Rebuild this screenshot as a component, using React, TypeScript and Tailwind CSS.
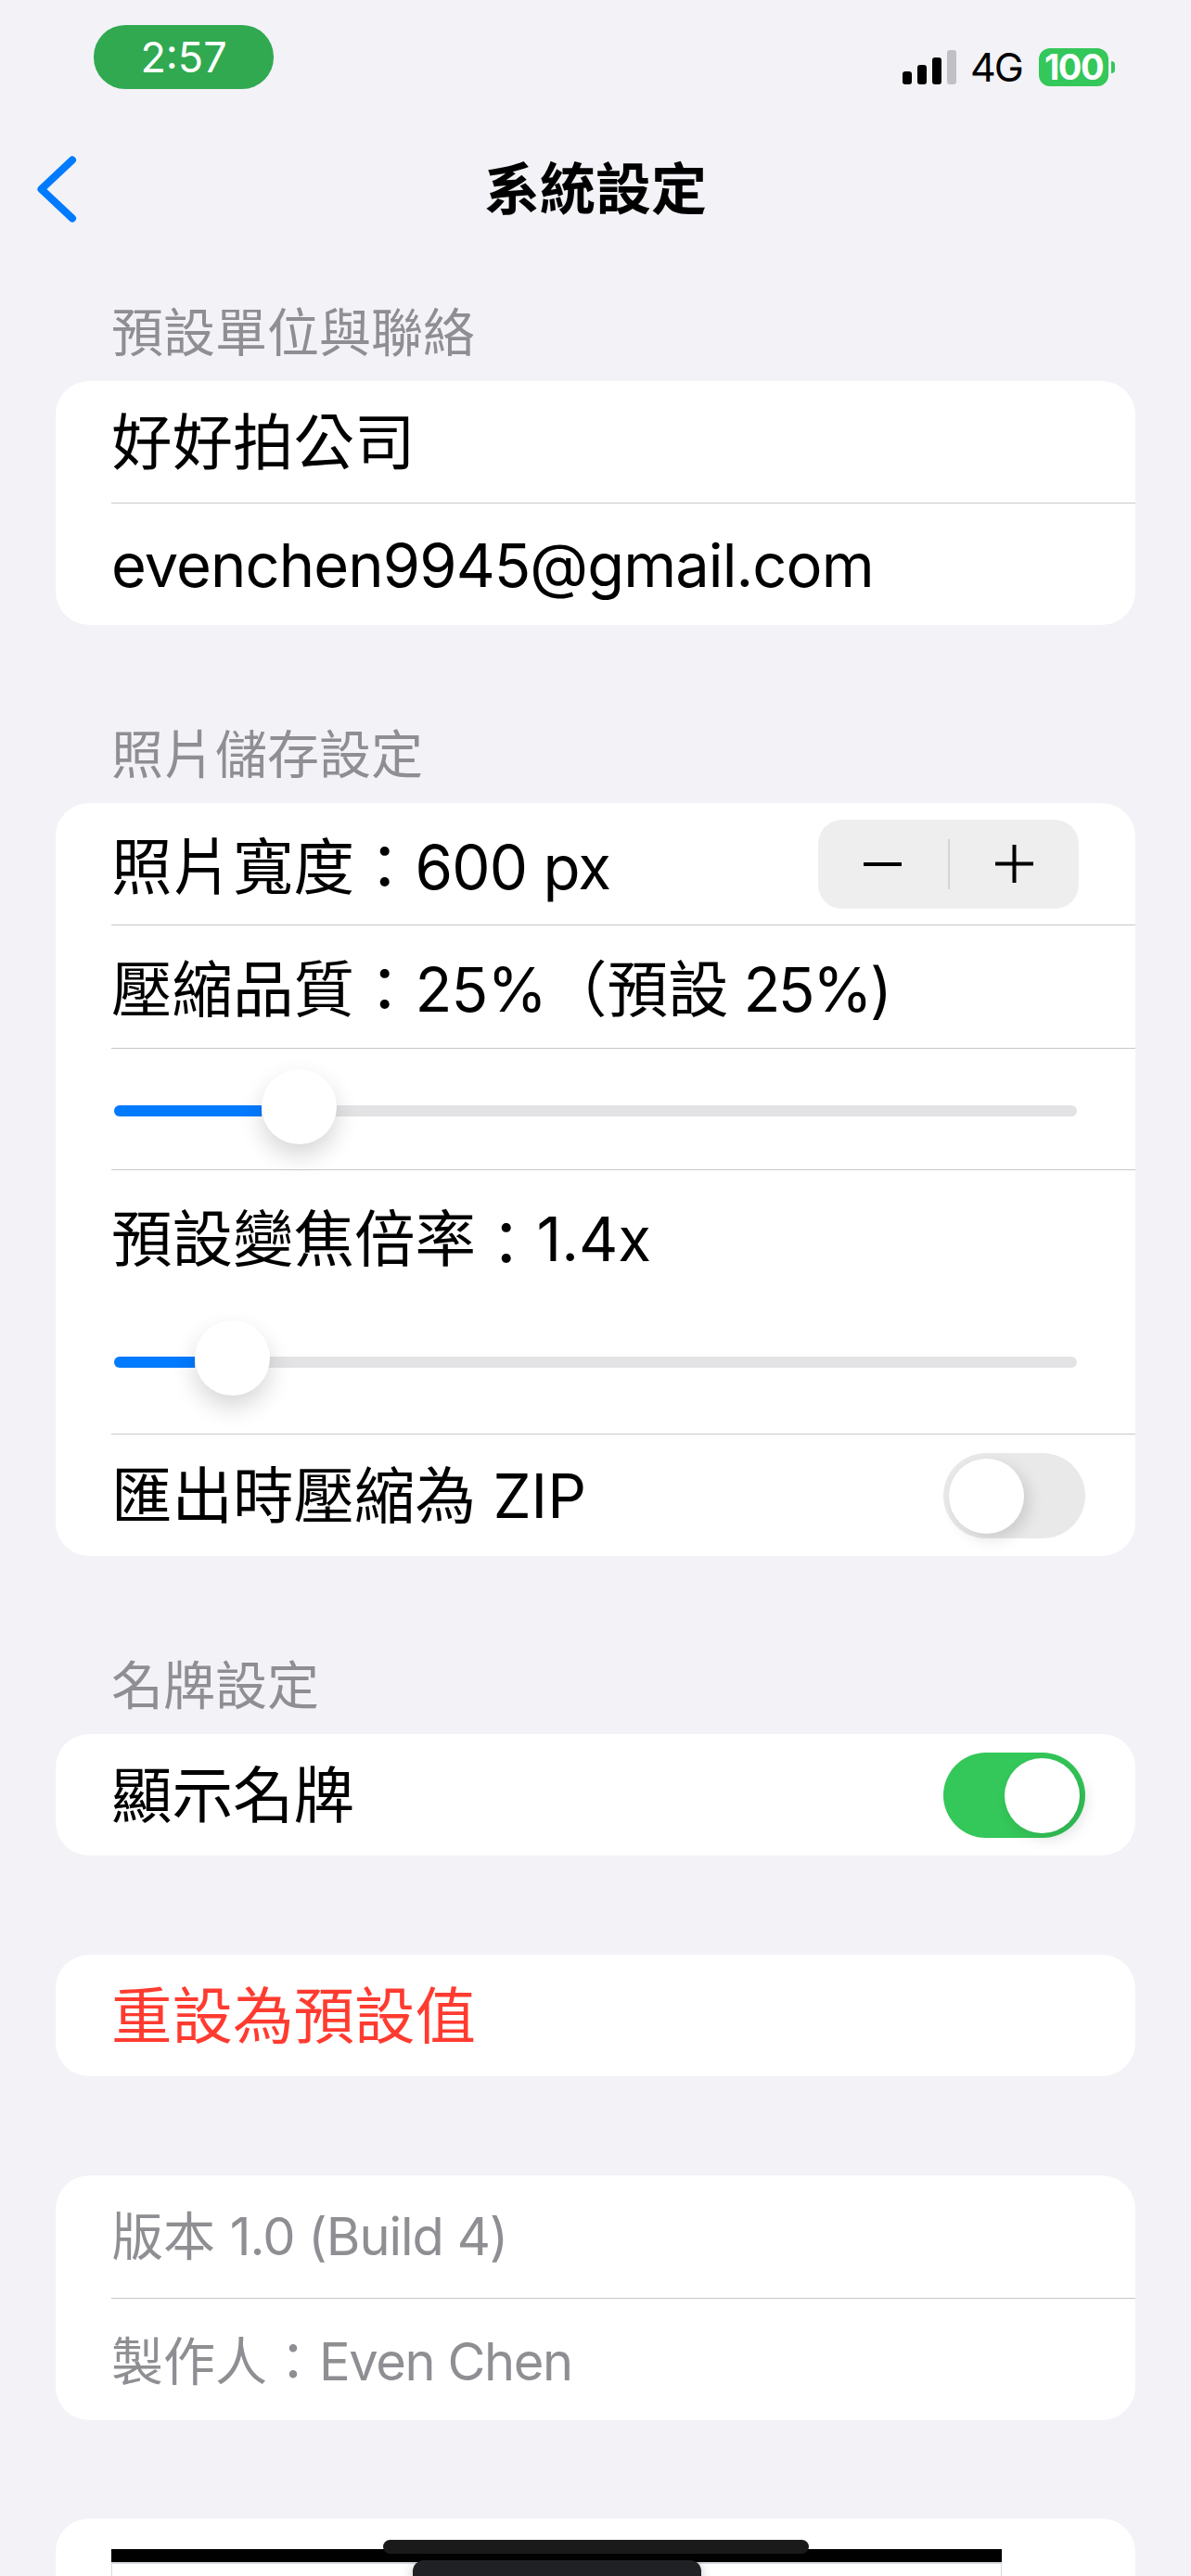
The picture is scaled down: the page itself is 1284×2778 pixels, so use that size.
const font = "font-['Inter','Noto_Sans_CJK_TC',sans-serif]";

function StatusBar() {
  return (
    <div className="flex h-[168px] items-start justify-between pl-[101px] pr-[82px] pt-[27px]">
      <div className="flex h-[69px] w-[194px] items-center justify-center rounded-[34px] bg-[#30a951] text-[45px] font-normal text-white">
        2:57
      </div>
      <div className="mt-[25px] flex h-[41px] items-end">
        <div className="mb-[2px] flex items-end gap-[6px]">
          <span className="h-[14px] w-[10px] rounded-[3px] bg-black" />
          <span className="h-[21px] w-[10px] rounded-[3px] bg-black" />
          <span className="h-[29px] w-[10px] rounded-[3px] bg-black" />
          <span className="h-[37px] w-[10px] rounded-[3px] bg-[#c0c0c5]" />
        </div>
        <span className="ml-[15px] mr-[19px] w-[55px] self-center whitespace-nowrap text-[43px] leading-none tracking-[-2px] text-black">
          4G
        </span>
        <div className="flex h-[41px] w-[75px] items-center justify-center rounded-[12px] bg-[#34c759] text-[38px] font-bold tracking-[-1.5px] text-white">
          100
        </div>
        <span className="mb-[14px] ml-[3px] h-[13px] w-[4px] rounded-r-full bg-[#34c759]" />
      </div>
    </div>
  );
}

function NavBar() {
  return (
    <div className="relative flex h-[72px] items-center justify-center">
      <button type="button" className="absolute left-[38px] top-[-1px]">
        <svg width="46" height="74" viewBox="0 0 46 74" fill="none">
          <path d="M40 5.5 L6.5 37 L40 68.5" stroke="#007aff" strokeWidth="8" strokeLinecap="round" strokeLinejoin="round" />
        </svg>
      </button>
      <h1 className="text-[60px] font-bold leading-none text-black">系統設定</h1>
    </div>
  );
}

function SectionLabel({ children }: { children: string }) {
  return (
    <div className="flex h-[106px] items-center pl-[60px] pt-[2px] text-[56px] text-[#8e8e93]">
      {children}
    </div>
  );
}

function Row({ children, first, className }: { children: React.ReactNode; first?: boolean; className?: string }) {
  return (
    <div className={`ml-[60px] flex items-center ${first ? "" : "border-t border-[#c8c8ca]"} ${className ?? "h-[132px]"}`}>
      {children}
    </div>
  );
}

// row text sits a little under the optical centre of its row
function Label({ children, className }: { children: React.ReactNode; className?: string }) {
  return <span className={`whitespace-nowrap ${className ?? "mt-[4px]"}`}>{children}</span>;
}

// latin runs are tracked tighter than the CJK around them
function Latin({ children, className }: { children: string; className?: string }) {
  return <span className={className ?? "tracking-[-0.9px]"}>{children}</span>;
}

function Cjk({ children }: { children: string }) {
  return <span className="font-['Noto_Sans_CJK_TC',sans-serif]">{children}</span>;
}

function Card({ children, className }: { children: React.ReactNode; className?: string }) {
  return <div className={`overflow-hidden rounded-[36px] bg-white ${className ?? ""}`}>{children}</div>;
}

function Slider({ fill, thumb }: { fill: string; thumb: string }) {
  return (
    <div className="relative ml-[3px] h-[12px] w-[1038px] rounded-full bg-[#e3e3e6]">
      <div className={`h-full rounded-l-full bg-[#007aff] ${fill}`} />
      <div className={`absolute top-[-39px] h-[81px] w-[81px] rounded-full bg-white shadow-[0_12px_26px_rgba(0,0,0,0.16)] ${thumb}`} />
    </div>
  );
}

function Toggle({ on }: { on?: boolean }) {
  return (
    <div className={`relative ml-auto mr-[54px] h-[92px] w-[153px] rounded-full ${on ? "bg-[#34c759]" : "bg-[#e9e9ea]"}`}>
      <div
        className={`absolute top-[6px] h-[81px] w-[81px] rounded-full bg-white shadow-[6px_6px_16px_rgba(0,0,0,0.12)] ${on ? "left-[66px]" : "left-[6px]"}`}
      />
    </div>
  );
}

function Stepper() {
  return (
    <div className="ml-auto mr-[61px] flex h-[96px] w-[281px] items-center rounded-[26px] bg-[#eeeeef]">
      <div className="flex flex-1 items-center justify-center">
        <span className="h-[4px] w-[41px] bg-black" />
      </div>
      <span className="h-[54px] w-[2px] bg-[#d5d5d7]" />
      <div className="flex flex-1 items-center justify-center">
        <svg width="41" height="41" viewBox="0 0 41 41">
          <path d="M20.5 0V41M0 20.5H41" stroke="#000" strokeWidth="4" />
        </svg>
      </div>
    </div>
  );
}

export default function App() {
  return (
    <div className={`relative h-[2778px] overflow-hidden bg-[#f2f2f7] text-[65.5px] text-black ${font}`}>
      <StatusBar />
      <NavBar />

      <div className="mx-[60px] mt-[65px]">
        <SectionLabel>預設單位與聯絡</SectionLabel>
        <Card>
          <Row first className="h-[131px]">
            <Label>好好拍公司</Label>
          </Row>
          <Row>
            <Label className="mt-[3px]">
              <Latin className="text-[65px] tracking-[-0.9px]">evenchen9945@gmail.com</Latin>
            </Label>
          </Row>
        </Card>

        <div className="mt-[86px]">
          <SectionLabel>照片儲存設定</SectionLabel>
        </div>
        <Card>
          <Row first className="h-[131px]">
            <Label>
              照片寬度<Cjk>：</Cjk>
              <Latin>600 px</Latin>
            </Label>
            <Stepper />
          </Row>
          <Row className="h-[133px]">
            <Label>
              壓縮品質<Cjk>：</Cjk>
              <Latin>25%</Latin>
              <Cjk>（</Cjk>預設<Latin className="tracking-[-2.5px]"> 25%)</Latin>
            </Label>
          </Row>
          <Row className="h-[131px] pt-[3px]">
            <Slider fill="w-[159px]" thumb="left-[159px]" />
          </Row>
          <Row className="h-[285px] flex-col items-start">
            <div className="flex h-[150px] items-center whitespace-nowrap">
              預設變焦倍率<Cjk>：</Cjk>
              <Latin className="tracking-normal">1.4x</Latin>
            </div>
            <div className="mt-[51px]">
              <Slider fill="w-[87px]" thumb="left-[87px]" />
            </div>
          </Row>
          <Row>
            <Label>匯出時壓縮為 ZIP</Label>
            <Toggle />
          </Row>
        </Card>

        <div className="mt-[86px]">
          <SectionLabel>名牌設定</SectionLabel>
        </div>
        <Card>
          <Row first className="h-[131px]">
            <Label>顯示名牌</Label>
            <Toggle on />
          </Row>
        </Card>

        <Card className="mt-[107px]">
          <Row first className="h-[131px] text-[#ff3b30]">
            <Label>重設為預設值</Label>
          </Row>
        </Card>

        <Card className="mt-[107px] text-[56px] text-[#8e8e93]">
          <Row first>
            <Label className="mt-0">
              版本 <Latin className="tracking-[-1px]">1.0 (Build 4)</Latin>
            </Label>
          </Row>
          <Row>
            <Label className="mt-0">
              製作人<Cjk>：</Cjk>
              <Latin className="tracking-[-1.4px]">Even Chen</Latin>
            </Label>
          </Row>
        </Card>

        <Card className="relative mt-[106px] h-[200px] pl-[60px] pt-[33px]">
          <div className="h-[14px] w-[960px] bg-black" />
          <div className="h-[160px] w-[960px] border-x border-t-2 border-[#d5dbe0] bg-white" />
        </Card>
      </div>

      {/* home-screen overlays floating above the last card */}
      <div className="absolute left-[413px] top-[2739px] h-[15px] w-[459px] rounded-[8px] bg-[#1a1a1a]" />
      <div className="absolute left-[445px] top-[2761px] h-[20px] w-[311px] rounded-t-[12px] bg-[#202124] shadow-[0_2px_12px_rgba(0,0,0,0.25)]" />
    </div>
  );
}
